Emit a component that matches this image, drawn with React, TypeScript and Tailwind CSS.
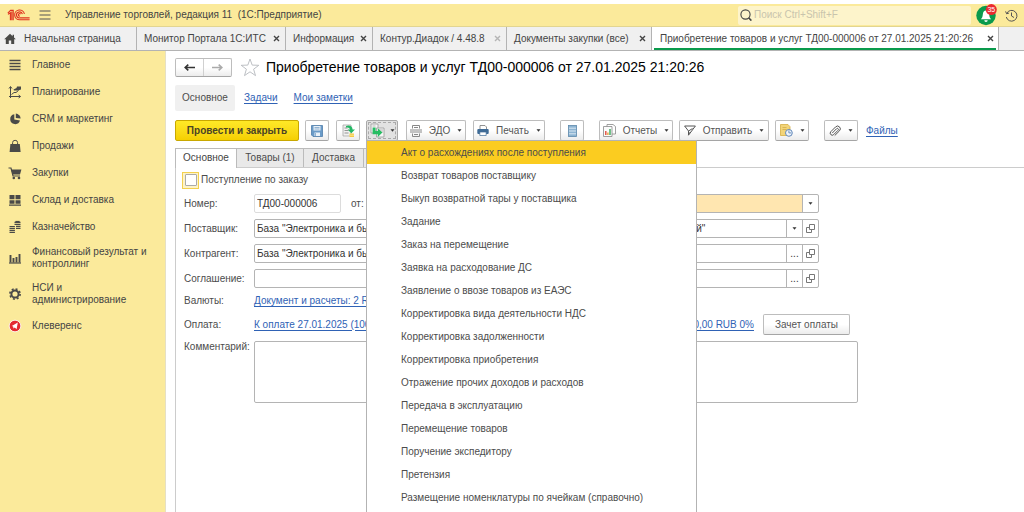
import type { ReactNode } from 'react'

const ink = '#4a4a48'

function Icon({ children }: { children: ReactNode }) {
  return (
    <svg width="14" height="14" viewBox="0 0 14 14" fill="none" stroke={ink} strokeWidth="1.2" className="shrink-0" aria-hidden="true">
      {children}
    </svg>
  )
}

function Caret() {
  return (
    <svg width="5" height="3" viewBox="0 0 5 3" className="shrink-0" aria-hidden="true">
      <path d="M0.5 0.3h4L2.5 2.8z" fill="#333" />
    </svg>
  )
}

function Logo() {
  return (
    <svg width="24" height="14" viewBox="0 0 24 14" fill="none" stroke="#e0301e" strokeWidth="1.1" className="shrink-0" aria-hidden="true">
      <path d="M0.8 5.2 3.6 2.4H6.2V12.2M1 6.4 3.4 4.8V12.2M4.8 3.6V12.2" />
      <path d="M17.4 6A4.9 4.9 0 1 0 12.8 11.8H22.6" />
      <path d="M15.4 6.2A3 3 0 1 0 12.8 9.9H22.6" />
      <path d="M13.6 6.2A1.2 1.2 0 1 0 12.8 8.1" />
    </svg>
  )
}

const sections: { label: string; icon: ReactNode }[] = [
  {
    label: 'Главное',
    icon: (
      <Icon>
        <path d="M1.5 2.5h11M1.5 5.5h11M1.5 8.5h11M1.5 11.5h11" strokeWidth="1.6" />
      </Icon>
    ),
  },
  {
    label: 'Планирование',
    icon: (
      <Icon>
        <path d="M2.5 13V2M1 3.5 2.5 1.5 4 3.5M1 11.5h11M10.6 10 12.6 11.5 10.6 13" strokeWidth="1" />
        <path d="M3.5 9.5 6 7.5h2L10.5 5.5" strokeWidth="1" />
        <path d="M5.5 4.5 8.5 3 9 1.500H13v3L10 5.500H6z" fill={ink} stroke="none" />
      </Icon>
    ),
  },
  {
    label: 'CRM и маркетинг',
    icon: (
      <Icon>
        <path d="M6.3 2.2A5 5 0 1 0 12 8.6L6.3 7.6z" fill={ink} stroke="none" />
        <path d="M7.8 1.6A5 5 0 0 1 12.6 6.6L7.8 6z" fill={ink} stroke="none" />
      </Icon>
    ),
  },
  {
    label: 'Продажи',
    icon: (
      <Icon>
        <path d="M2.4 5h9.4l.8 8H1.6z" fill={ink} stroke="none" />
        <path d="M4.6 6V3.6a2.5 2.3 0 0 1 5 0V6" strokeWidth="1" />
      </Icon>
    ),
  },
  {
    label: 'Закупки',
    icon: (
      <Icon>
        <path d="M3.2 3.5H13.4L12 8.6H4.6z" fill={ink} stroke="none" />
        <path d="M0.5 2H3l2 8h7" />
        <circle cx="5.8" cy="12" r="1.3" fill={ink} stroke="none" />
        <circle cx="11" cy="12" r="1.3" fill={ink} stroke="none" />
      </Icon>
    ),
  },
  {
    label: 'Склад и доставка',
    icon: (
      <Icon>
        <path d="M1.5 2H6.5V6.2H1.5zM7.5 2h5v4.2h-5zM1.5 7.2h5v3.6h-5zM7.5 7.2h5v3.6h-5zM1 11.6h12v1.2H1z" fill={ink} stroke="none" />
      </Icon>
    ),
  },
  {
    label: 'Казначейство',
    icon: (
      <Icon>
        <path d="M6.5 2.4h6M6.5 4.4h6M8 6.4h4.5M8 8.4h4.5M1.5 6.6h5.4M1.5 8.6h5.4M1.5 10.6h5.4M1.5 12.5h5.4" strokeWidth="1.2" />
        <path d="M7.4 1.5h4.2" />
      </Icon>
    ),
  },
  {
    label: 'Финансовый результат и контроллинг',
    icon: (
      <Icon>
        <path d="M2.5 4v7.5M5.5 7v4.5M8.5 6v5.5M11.5 3v8.5" strokeWidth="1.9" />
        <path d="M1 12h12" />
      </Icon>
    ),
  },
  {
    label: 'НСИ и администрирование',
    icon: (
      <Icon>
        <circle cx="7" cy="7" r="3.600" strokeWidth="2" />
        <circle cx="7" cy="7" r="5.100" strokeWidth="1.600" strokeDasharray="2 2.005" />
      </Icon>
    ),
  },
  {
    label: 'Клеверенс',
    icon: (
      <Icon>
        <circle cx="7" cy="7" r="5.8" fill="#e32b2f" stroke="#fff" strokeWidth="0.8" />
        <path d="M9.8 3.6 8.6 10.2 6.8 8.6 5.4 9.6 5.2 7.6 3.8 7z" fill="#fff" stroke="none" />
      </Icon>
    ),
  },
]

const openTabs = [
  { label: 'Монитор Портала 1С:ИТС', width: 'w-[149px]' },
  { label: 'Информация', width: 'w-[87px]' },
  { label: 'Контур.Диадок / 4.48.8', width: 'w-[134px]', muted: true },
  { label: 'Документы закупки (все)', width: 'w-[145px]' },
]

const menuItems = [
  'Акт о расхождениях после поступления',
  'Возврат товаров поставщику',
  'Выкуп возвратной тары у поставщика',
  'Задание',
  'Заказ на перемещение',
  'Заявка на расходование ДС',
  'Заявление о ввозе товаров из ЕАЭС',
  'Корректировка вида деятельности НДС',
  'Корректировка задолженности',
  'Корректировка приобретения',
  'Отражение прочих доходов и расходов',
  'Передача в эксплуатацию',
  'Перемещение товаров',
  'Поручение экспедитору',
  'Претензия',
  'Размещение номенклатуры по ячейкам (справочно)',
]

function CloseButton({ muted = false }: { muted?: boolean }) {
  return (
    <button type="button" aria-label="Закрыть" className="flex h-3 w-2 shrink-0 items-center justify-center">
      <svg width="7" height="7" viewBox="0 0 7 7" stroke={muted ? '#b5b5b5' : '#444'} strokeWidth="1.4" aria-hidden="true">
        <path d="M1 1l5 5M6 1L1 6" />
      </svg>
    </button>
  )
}

const toolButton =
  'flex h-[21px] shrink-0 items-center justify-center gap-[7px] rounded-[2px] border border-[#bdbdbd] border-b-[#a5a5a5] bg-linear-to-b from-white from-50% to-[#ececec] text-[#555]'

function OpenIcon() {
  return (
    <svg width="9" height="9" viewBox="0 0 9 9" fill="none" stroke="#777" strokeWidth="1" aria-hidden="true">
      <path d="M3.5 0.5h5v5h-5zM3.5 3.5h-3v5h5v-3" />
    </svg>
  )
}

const fieldBox = 'flex h-[19px] overflow-hidden rounded-[2px] border border-[#b4b4b4] bg-white'
const fieldInput = 'min-w-0 flex-1 px-[2px] text-[#333] outline-none'
const fieldButton = 'flex w-4 shrink-0 items-center justify-center border-l border-[#b4b4b4]'

function PartnerField({ id, label, value, picker }: { id: string; label: string; value: string; picker: 'list' | 'dots' }) {
  return (
    <div className="flex h-[25px] items-center">
      <label htmlFor={id} className="w-[70px] shrink-0">
        {label}
      </label>
      <div className={`${fieldBox} w-[565px]`}>
        <input id={id} className={fieldInput} defaultValue={value} />
        <button type="button" aria-label="Выбрать" className={fieldButton}>
          {picker === 'list' ? <Caret /> : <span className="text-[#333]">...</span>}
        </button>
        <button type="button" aria-label="Открыть" className={fieldButton}>
          <OpenIcon />
        </button>
      </div>
    </div>
  )
}

const link = 'text-[#2f62b5] underline underline-offset-2'

export default function App() {
  return (
    <div className="flex h-screen flex-col overflow-hidden bg-white pt-1 font-['Liberation_Sans',Arial,sans-serif] text-[10px] leading-[12px] text-[#4c4c4c]">
      <header className="flex h-[23px] shrink-0 items-center border-b border-[#e2d591] bg-[#fbea9b] pr-[6px] pl-[7px]">
        <Logo />
        <button type="button" aria-label="Меню" className="ml-2">
          <svg width="12" height="10" viewBox="0 0 12 10" stroke="#555" strokeWidth="1" aria-hidden="true">
            <path d="M0.5 1h11M0.5 5h11M0.5 9h11" />
          </svg>
        </button>
        <span className="ml-[14px] whitespace-pre text-[#444]">Управление торговлей, редакция 11  (1С:Предприятие)</span>
        <label className="ml-auto flex h-[19px] w-[233px] items-center gap-[2px] rounded-[2px] bg-[#fdf4cb] px-[2px]">
          <svg width="12" height="12" viewBox="0 0 12 12" fill="none" stroke="#444" strokeWidth="1.1" aria-hidden="true">
            <circle cx="5.500" cy="5.500" r="4.600" />
            <path d="M8.600 8.800 11.400 11.600" strokeWidth="1.6" />
          </svg>
          <input type="search" aria-label="Поиск" placeholder="Поиск Ctrl+Shift+F" className="min-w-0 flex-1 bg-transparent outline-none placeholder:text-[#c9c4ad]" />
        </label>
        <button type="button" aria-label="Уведомления" className="ml-1">
          <svg width="22" height="22" viewBox="0 0 22 22" aria-hidden="true">
            <circle cx="11" cy="11.5" r="9.7" fill="#0a9a4c" />
            <path d="M5.8 15.2c1.4-1 1.8-2.4 2-4.6.2-2.6 1.3-4 3.2-4s3 1.4 3.2 4c.2 2.200.6 3.600 2 4.600z" fill="#fff" />
            <path d="M9.300 16.200h3.400a1.700 1.700 0 0 1-3.400 0z" fill="#fff" />
            <circle cx="16.300" cy="5.600" r="5.500" fill="#ea2a2e" />
            <text x="16.300" y="8" fontSize="7" fill="#fff" textAnchor="middle">
              35
            </text>
          </svg>
        </button>
        <button type="button" aria-label="История" className="ml-2">
          <svg width="13" height="13" viewBox="0 0 13 13" fill="none" stroke="#555" strokeWidth="1" aria-hidden="true">
            <path d="M1.800 4.200A5.400 5.400 0 1 1 1.300 8M0.600 2.400 1.600 4.800 4.100 4M6.500 3.500V7L9 8.500" />
          </svg>
        </button>
      </header>

      <nav aria-label="Открытые окна" className="flex h-6 shrink-0 items-stretch border-b border-[#b3b3b3] bg-[#f0f0f0] text-[#444]">
        <a href="#home" className="flex w-[137px] shrink-0 items-center gap-2 border-r border-[#b3b3b3] pl-1">
          <svg width="12" height="12" viewBox="0 0 12 12" fill={ink} aria-hidden="true">
            <path d="M6 0.800 0.200 6.200H1.800V11H4.800V7.500H7.200V11H10.200V6.200H11.800L10 4.500V1.800H8.600V3.200z" />
          </svg>
          Начальная страница
        </a>
        {openTabs.map((tab) => (
          <div key={tab.label} className={`flex shrink-0 items-center justify-between border-r border-[#b3b3b3] pr-[5px] pl-[7px] ${tab.width}`}>
            <a href="#tab">{tab.label}</a>
            <CloseButton muted={tab.muted} />
          </div>
        ))}
        <div className="flex w-[347px] shrink-0 items-stretch border-r border-[#b3b3b3] bg-white px-[2px]">
          <div className="flex flex-1 items-center justify-between border-b-2 border-[#0a9a4c] pt-[2px] pr-[2px] pl-[6px]">
            <a href="#tab" aria-current="page">
              Приобретение товаров и услуг ТД00-000006 от 27.01.2025 21:20:26
            </a>
            <CloseButton />
          </div>
        </div>
      </nav>

      <div className="flex min-h-0 flex-1">
        <aside className="w-[166px] shrink-0 border-r border-[#e6e0c4] bg-[#fbea9b]">
          <nav aria-label="Разделы">
            <ul>
              {sections.map((section) => (
                <li key={section.label}>
                  <a href="#section" className="flex min-h-[27px] items-center gap-[10px] py-[6px] pr-2 pl-2 text-[#444]">
                    {section.icon}
                    <span>{section.label}</span>
                  </a>
                </li>
              ))}
            </ul>
          </nav>
        </aside>

        <main className="flex min-w-0 flex-1 flex-col pt-[6px] pl-[9px]">
          <div className="flex h-5 shrink-0 items-center">
            <div className="flex h-[19px] w-[57px] shrink-0 rounded-[2px] border border-[#bdbdbd] border-b-[#a5a5a5] bg-linear-to-b from-white from-50% to-[#ececec]">
              <button type="button" aria-label="Назад" className="flex flex-1 items-center justify-center border-r border-[#d0d0d0]">
                <svg width="11" height="7" viewBox="0 0 11 7" fill="none" stroke="#333" strokeWidth="1.600" aria-hidden="true">
                  <path d="M11 3.500H1.500M4.300 0.600 1.200 3.500 4.300 6.400" />
                </svg>
              </button>
              <button type="button" aria-label="Вперед" className="flex flex-1 items-center justify-center">
                <svg width="11" height="7" viewBox="0 0 11 7" fill="none" stroke="#aaa" strokeWidth="1.600" aria-hidden="true">
                  <path d="M0 3.500h9.500M6.700 0.600 9.800 3.500 6.700 6.400" />
                </svg>
              </button>
            </div>
            <button type="button" aria-label="В избранное" className="ml-2">
              <svg width="20" height="19" viewBox="0 0 20 19" fill="#fff" stroke="#b5b9bd" strokeWidth="0.900" aria-hidden="true">
                <path d="M10 1 12.200 7.100 18.800 7.300 13.600 11.200 15.500 17.600 10 13.800 4.500 17.600 6.400 11.200 1.200 7.300 7.800 7.100z" />
              </svg>
            </button>
            <h1 className="ml-[6px] text-[14px] leading-5 whitespace-nowrap text-black">
              Приобретение товаров и услуг ТД00-000006 от 27.01.2025 21:20:26
            </h1>
          </div>

          <nav aria-label="Разделы документа" className="mt-2 flex h-[26px] shrink-0 items-center">
            <a href="#main" aria-current="page" className="flex h-full w-[60px] items-center justify-center rounded-[2px] bg-[#f0f0f0]">
              Основное
            </a>
            <a href="#tasks" className={`${link} ml-[9px]`}>
              Задачи
            </a>
            <a href="#notes" className={`${link} ml-4`}>
              Мои заметки
            </a>
          </nav>

          <div className="mt-[9px] flex h-[21px] shrink-0 items-center">
            <button type="button" className="h-[21px] w-[124px] shrink-0 rounded-[2px] border border-[#c9a800] bg-linear-to-b from-[#ffe926] to-[#f5cf00] font-bold text-[#4a4326]">
              Провести и закрыть
            </button>
            <button type="button" aria-label="Записать" className={`${toolButton} ml-[6px] w-6`}>
              <svg width="12" height="12" viewBox="0 0 12 12" aria-hidden="true">
                <path d="M0.500 0.500h11v11h-9.500l-1.500-1.500z" fill="#6a9bc8" stroke="#4f7dab" strokeWidth="0.800" />
                <path d="M2.500 1h7v4.500h-7zM3.500 7.500h5.500V11H3.500z" fill="#e9f1f8" />
                <path d="M3.500 2.500h5M3.500 4h5M4.500 8v3" stroke="#7ba3c8" strokeWidth="0.800" />
              </svg>
            </button>
            <button type="button" aria-label="Провести" className={`${toolButton} ml-[7px] w-6`}>
              <svg width="13" height="14" viewBox="0 0 13 14" aria-hidden="true">
                <path d="M1 1h8v11H1z" fill="#f1f1f1" stroke="#a7a7a7" strokeWidth="0.800" />
                <path d="M2.500 4h3M2.500 6.500h4M2.500 9h4" stroke="#8a8a8a" strokeWidth="0.900" />
                <path d="M4 2C7 0.500 10.500 2 10.600 5.500H13L9.300 9.200 5.600 5.500H8C7.600 4 6 3.400 4 3.600z" fill="#24b765" />
                <path d="M7.500 9.500h4.500v3.500H7.500z" fill="#f4cb45" />
                <path d="M7.500 11.200h4.500" stroke="#fff1b0" strokeWidth="0.700" />
              </svg>
            </button>
            <div className="relative ml-[6px] shrink-0">
              <button
                type="button"
                aria-label="Создать на основании"
                aria-expanded="true"
                className="flex h-[21px] w-8 items-center justify-center gap-[5px] rounded-[2px] border border-[#a9a9a9] bg-[#e2e2e2] outline-1 -outline-offset-3 outline-dashed outline-[#aaa]"
              >
                <svg width="15" height="15" viewBox="0 0 15 15" aria-hidden="true">
                  <path d="M1 1h7v9H1z" fill="#f6f6f6" stroke="#9a9a9a" strokeWidth="0.800" />
                  <path d="M6.500 5h7.500v9H6.500z" fill="#f6f6f6" stroke="#9a9a9a" strokeWidth="0.800" />
                  <path d="M2.500 3h3M9 7h4M10.500 9h2.500" stroke="#aaa" strokeWidth="0.800" />
                  <path d="M2.600 4.600h3v3.400H7.800V5.200L12.400 9.600 7.800 14V11.200H2.600z" fill="#27bd63" />
                </svg>
                <Caret />
              </button>
              <div role="menu" className="absolute top-5 left-0 z-10 w-[331px] border border-[#b3b3b3] bg-white pb-6">
                {menuItems.map((item, index) => (
                  <button
                    key={item}
                    type="button"
                    role="menuitem"
                    className={`flex h-[23px] w-full items-center pl-[34px] text-left whitespace-nowrap ${index === 0 ? 'bg-[#fbcc20]' : ''}`}
                  >
                    {item}
                  </button>
                ))}
              </div>
            </div>
            <button type="button" className={`${toolButton} ml-2 w-[60px]`}>
              <svg width="12" height="12" viewBox="0 0 12 12" fill="none" stroke="#888" strokeWidth="1" aria-hidden="true">
                <path d="M2.500 3.500v-3h7v3M2.500 8.500v3h7v-3M0 5h12M0 7h12M4 2.500h4M4 9.500h4" />
              </svg>
              ЭДО
              <Caret />
            </button>
            <button type="button" className={`${toolButton} ml-[7px] w-[72px]`}>
              <svg width="12" height="11" viewBox="0 0 12 11" aria-hidden="true">
                <path d="M3 0.500h5l1.500 1.500V5H3z" fill="#fff" stroke="#777" strokeWidth="0.800" />
                <rect x="0.300" y="4" width="11.400" height="5" rx="1" fill="#3f6b96" />
                <path d="M2.800 7h6.400v3.500H2.800z" fill="#fff" stroke="#3f6b96" strokeWidth="0.700" />
              </svg>
              Печать
              <Caret />
            </button>
            <button type="button" aria-label="Структура" className={`${toolButton} ml-[15px] w-6`}>
              <svg width="9" height="12" viewBox="0 0 9 12" aria-hidden="true">
                <rect x="0.500" y="0.500" width="8" height="11" fill="#8db4d2" stroke="#5c88ab" strokeWidth="0.800" />
                <path d="M1 3.200h7M1 6h7M1 8.800h7" stroke="#e3eef6" strokeWidth="0.900" />
              </svg>
            </button>
            <button type="button" className={`${toolButton} ml-[15px] w-[74px]`}>
              <svg width="13" height="13" viewBox="0 0 13 13" aria-hidden="true">
                <path d="M4 0.500h6l2.500 2V10H4z" fill="#fff" stroke="#888" strokeWidth="0.800" />
                <path d="M0.500 2.500h8.500v10H0.500z" fill="#fafafa" stroke="#888" strokeWidth="0.800" />
                <path d="M2.800 11V7" stroke="#e24b3b" strokeWidth="1.400" />
                <path d="M4.900 11V8.500" stroke="#e9a13b" strokeWidth="1.400" />
                <path d="M7 11V5" stroke="#35a85a" strokeWidth="1.400" />
              </svg>
              Отчеты
              <Caret />
            </button>
            <button type="button" className={`${toolButton} ml-[6px] w-[90px]`}>
              <svg width="12" height="11" viewBox="0 0 12 11" fill="none" stroke="#555" strokeWidth="1" aria-hidden="true">
                <path d="M0.600 1h10.800L4.500 10.200V6L0.600 1M4.500 6 8.500 3.500M4.500 8.500 6.500 7.400" />
              </svg>
              Отправить
              <Caret />
            </button>
            <button type="button" aria-label="Заметки" className={`${toolButton} ml-[6px] w-[34px]`}>
              <svg width="13" height="13" viewBox="0 0 13 13" aria-hidden="true">
                <path d="M0.500 0.500h7.500l2 2.200V11.500H0.500z" fill="#f2d479" stroke="#d5ae45" strokeWidth="0.800" />
                <path d="M2.500 3.500h4M2.500 5.500h4" stroke="#d0a840" strokeWidth="0.700" />
                <circle cx="8.900" cy="8.900" r="3.400" fill="#eef4fb" stroke="#5f86b8" strokeWidth="1" />
                <path d="M8.900 6.500v2.400h2.400" fill="none" stroke="#5f86b8" strokeWidth="0.900" />
              </svg>
              <Caret />
            </button>
            <button type="button" aria-label="Вложения" className={`${toolButton} ml-[15px] w-[34px]`}>
              <svg width="12" height="12" viewBox="0 0 12 12" fill="none" stroke="#555" strokeWidth="1" strokeLinecap="round" aria-hidden="true">
                <path d="M3.500 7.800 7.600 3.700a1 1 0 0 1 1.500 1.500L4.700 9.600a2 2 0 0 1-2.900-2.900L6.600 1.900a2.700 2.700 0 0 1 3.900 3.900L6 10.300" />
              </svg>
              <Caret />
            </button>
            <a href="#files" className={`${link} ml-2`}>
              Файлы
            </a>
          </div>

          <div role="tablist" className="mt-[7px] flex h-[19px] shrink-0 items-stretch">
            <button type="button" role="tab" aria-selected="true" className="relative z-1 -mb-px w-[62px] shrink-0 border border-b-0 border-[#bbb] bg-white pb-px text-[#444]">
              Основное
            </button>
            <button type="button" role="tab" aria-selected="false" className="w-[67px] shrink-0 border-t border-r border-[#bbb] bg-[#e9e9e9]">
              Товары (1)
            </button>
            <button type="button" role="tab" aria-selected="false" className="w-[60px] shrink-0 border-t border-r border-[#bbb] bg-[#e9e9e9]">
              Доставка
            </button>
            <button type="button" role="tab" aria-selected="false" className="w-[100px] shrink-0 border-t border-r border-[#bbb] bg-[#e9e9e9]">
              Дополнительно
            </button>
          </div>

          <form className="min-h-0 flex-1 border-t border-l border-[#ccc] pl-2">
            <label className="flex h-[23px] items-center gap-[2px] pt-px">
              <span className="-ml-[2px] flex h-[17px] w-[17px] items-center justify-center border border-[#f3d04e] bg-[#fdf3c8]">
                <input type="checkbox" className="h-3 w-3 appearance-none rounded-[1px] border border-[#aaa] bg-white" />
              </span>
              Поступление по заказу
            </label>

            <div className="flex h-[25px] items-center">
              <label htmlFor="number" className="w-[70px] shrink-0">
                Номер:
              </label>
              <input id="number" defaultValue="ТД00-000006" className="h-[19px] w-[87px] rounded-[2px] border border-[#dcdcdc] px-[2px] text-[#333]" />
              <label htmlFor="status" className="ml-[10px] w-[262px] shrink-0">
                от:
              </label>
              <div className={`${fieldBox} w-[206px]`}>
                <input id="status" className={`${fieldInput} bg-[#ffe6b0]`} />
                <button type="button" aria-label="Выбрать" className={fieldButton}>
                  <Caret />
                </button>
              </div>
            </div>
            <PartnerField
              id="supplier"
              label="Поставщик:"
              picker="list"
              value={'База "Электроника и бытовая техника", магазин "Электротовары, лампы и инструмент бытовой"'}
            />
            <PartnerField id="contractor" label="Контрагент:" picker="dots" value={'База "Электроника и бытовая техника"'} />
            <PartnerField id="agreement" label="Соглашение:" picker="dots" value="" />

            <div className="flex h-5 items-center">
              <span className="w-[70px] shrink-0">Валюты:</span>
              <a href="#currency" className={link}>
                Документ и расчеты: 2 RUB
              </a>
            </div>
            <div className="flex h-[27px] items-center">
              <span className="w-[70px] shrink-0">Оплата:</span>
              <div className="flex w-[500px] shrink-0 justify-between">
                <a href="#payment" className={link}>
                  К оплате 27.01.2025 (100%)
                </a>
                <a href="#payment" className={link}>
                  1 000,00 RUB 0%
                </a>
              </div>
              <button type="button" className={`${toolButton} ml-[9px] w-[87px]`}>
                Зачет оплаты
              </button>
            </div>
            <div className="mt-[3px] flex">
              <label htmlFor="comment" className="w-[70px] shrink-0 whitespace-nowrap">
                Комментарий:
              </label>
              <textarea id="comment" className="h-[62px] w-[604px] resize-none rounded-[2px] border border-[#b4b4b4]" />
            </div>
          </form>
        </main>
      </div>
    </div>
  )
}
